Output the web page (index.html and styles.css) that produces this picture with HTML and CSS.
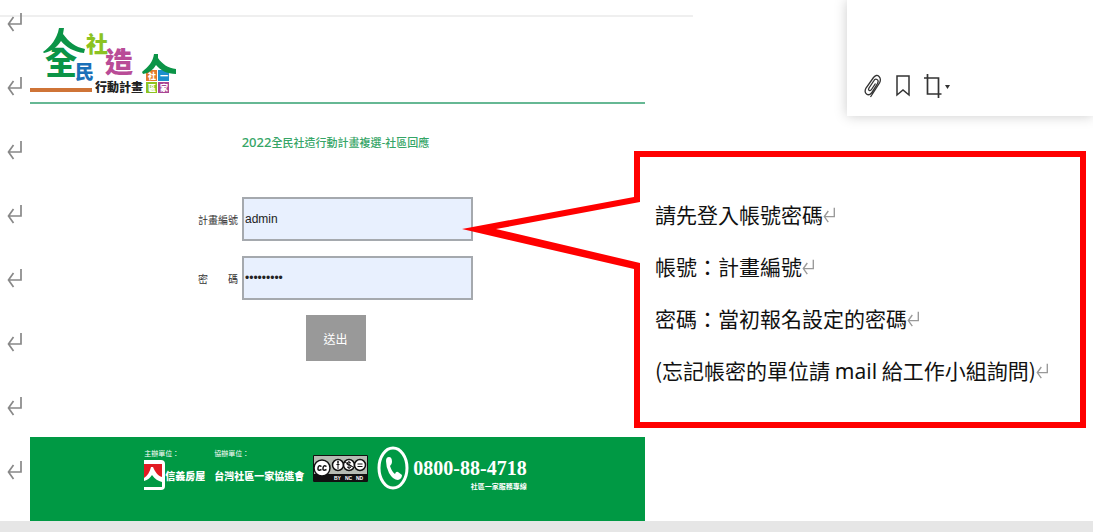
FILE: index.html
```html
<!DOCTYPE html>
<html lang="zh-Hant">

<head>
    <meta charset="UTF-8">
    <meta name="viewport" content="width=device-width, initial-scale=1.0">
    <title>2022全民社造行動計畫複選-社區回應</title>
    <link rel="stylesheet" href="styles.css">
</head>

<body>
    <svg class="defs" aria-hidden="true">
        <symbol id="return" viewBox="0 0 16 20">
            <path d="M14 1v11H1.500M6.500 5l-5 7 5 7" fill="none" stroke="currentColor" stroke-width="1.700" />
        </symbol>
    </svg>

    <div class="sheet">
        <div class="marks" aria-hidden="true">
            <svg><use href="#return" /></svg>
            <svg><use href="#return" /></svg>
            <svg><use href="#return" /></svg>
            <svg><use href="#return" /></svg>
            <svg><use href="#return" /></svg>
            <svg><use href="#return" /></svg>
            <svg><use href="#return" /></svg>
            <svg><use href="#return" /></svg>
        </div>

        <main class="site">
            <header class="site-header">
                <svg class="logo" viewBox="0 0 150 76" role="img" aria-label="全民社造行動計畫">
                    <path d="M0 65h62" stroke="#cf7437" stroke-width="4" />
                    <text x="15" y="49" font-size="32" fill="#0b9447">全</text>
                    <path d="M13 27C21 21 27 14 29 3h5l-1 6c6 8 12 13 22 15l-1 4c-10-1-18-6-23-12-4 6-9 10-17 12z" fill="#0b9447" />
                    <text x="56" y="27" font-size="22" fill="#8cc321">社</text>
                    <text x="45" y="54" font-size="19" fill="#1a70b8">民</text>
                    <text x="75" y="48" font-size="28" fill="#b94c97">造</text>
                    <text x="65" y="67" font-size="12" fill="#222">行動計畫</text>
                    <path d="M116 45h11v11h-11z" fill="#e47b2c" />
                    <path d="M128 45h11v11h-11z" fill="#1d8fce" />
                    <path d="M116 57h11v11h-11z" fill="#8cc321" />
                    <path d="M128 57h11v11h-11z" fill="#a94695" />
                    <g font-size="8" fill="#fff">
                        <text x="118" y="54">社</text>
                        <text x="130" y="54">一</text>
                        <text x="118" y="66">區</text>
                        <text x="130" y="66">家</text>
                    </g>
                    <path d="M112 47c6-5 11-10 12-18h4v4c4 6 10 10 18 11v5c-9 0-16-4-20-9-3 5-7 8-13 9z" fill="#0b9447" />
                </svg>
            </header>

            <form class="login">
                <h1><span class="latin">2022</span>全民社造行動計畫複選-社區回應</h1>
                <div class="field">
                    <label for="plan">計畫編號</label>
                    <input id="plan" type="text" value="admin">
                </div>
                <div class="field">
                    <label for="pass">密　　碼</label>
                    <input id="pass" type="password" value="123456789">
                </div>
                <button type="button">送出</button>
            </form>

            <footer class="site-footer">
                <div class="org">
                    <small>主辦單位：</small>
                    <div class="org-name">
                        <svg class="sinyi" viewBox="0 0 21 30" aria-hidden="true">
                            <path d="M0 0h17q4 0 4 4v22q0 4-4 4H0z" fill="#fff" />
                            <path d="M0 4h18v13c-4-1-7-5-9-10H7c-1 5-4 9-7 11z" fill="#e21b23" />
                            <path d="M0 21c4-1 6-3 8-6 3 4 6 6 10 7v5H0z" fill="#009944" />
                        </svg>
                        <strong>信義房屋</strong>
                    </div>
                </div>
                <div class="org">
                    <small>協辦單位：</small>
                    <div class="org-name"><strong>台灣社區一家協進會</strong></div>
                </div>
                <svg class="cc" viewBox="0 0 55 27" role="img" aria-label="CC BY NC ND">
                    <path d="M.5.500h54v26H.5z" fill="#b5bbb3" stroke="#111" />
                    <path d="M1 19h53v7H1z" fill="#111" />
                    <circle cx="9" cy="13" r="8" fill="#fff" stroke="#111" stroke-width="1.500" />
                    <path d="M8.500 11.500q-3-2-3.500 1.500t3.500 1.500M13.500 11.500q-3-2-3.500 1.500t3.500 1.500" fill="none" stroke="#111" stroke-width="1.500" />
                    <g fill="#fff" stroke="#111" stroke-width="1.500">
                        <circle cx="25" cy="10" r="5.500" />
                        <circle cx="36" cy="10" r="5.500" />
                        <circle cx="47" cy="10" r="5.500" />
                    </g>
                    <circle cx="25" cy="7" r="1" fill="#111" />
                    <path d="M25 8v6M23.500 9.500h3M38 8q-3-2-4 0t2 2 2 2-4 0M36 6v8M32 7l8 5M44.500 9h5M44.500 11.500h5" fill="none" stroke="#111" />
                    <g font-size="5" fill="#fff">
                        <text x="21" y="25">BY</text>
                        <text x="32" y="25">NC</text>
                        <text x="43" y="25">ND</text>
                    </g>
                </svg>
                <div class="hotline">
                    <svg viewBox="0 0 32 44" aria-hidden="true">
                        <ellipse cx="16" cy="22" rx="14" ry="20" fill="none" stroke="#fff" stroke-width="3" />
                        <path d="M9 15q0-4 3-4t3 5q0 2-2 4 2 6 5 8 1-3 3-2l4 3q0 4-4 5-5 0-9-7-3-6-3-12z" fill="#fff" />
                    </svg>
                    <div class="phone">
                        <span class="number">0800-88-4718</span>
                        <small>社區一家服務專線</small>
                    </div>
                </div>
            </footer>
        </main>

        <aside class="side">
            <div class="toolbar">
                <button type="button" aria-label="附件">
                    <svg width="18" height="26" viewBox="0 0 18 26">
                        <path d="M6.500 24L15.500 10q2-4-.5-6.500t-5.500 1L2 15q-2 4 .5 6t5-1l6-9.500q1.500-3-.5-4t-3 1l-5 7.500q-1 2 .3 2.500t2.200-1l4-6" fill="none" stroke="#333" stroke-width="1.300" />
                    </svg>
                </button>
                <button type="button" aria-label="書籤">
                    <svg width="14" height="22" viewBox="0 0 14 22">
                        <path d="M1 1h12v19l-6-5-6 5z" fill="none" stroke="#333" stroke-width="1.500" />
                    </svg>
                </button>
                <button type="button" aria-label="裁切">
                    <svg width="26" height="24" viewBox="0 0 26 24">
                        <path d="M3.500 0v20h14M0 4h14.500v20" fill="none" stroke="#333" stroke-width="1.700" />
                        <path d="M21 11h5l-2.500 4z" fill="#333" />
                    </svg>
                </button>
            </div>

            <div class="callout">
                <svg class="tail" viewBox="0 0 178 80" aria-hidden="true">
                    <path d="M172 4L18 34l154 38h6V4z" fill="#fff" />
                    <path d="M178 0v7L34 34l144 34v9h-6v-3L0 34 172 2V0z" fill="#f00" />
                </svg>
                <p>請先登入帳號密碼<svg><use href="#return" /></svg></p>
                <p>帳號：計畫編號<svg><use href="#return" /></svg></p>
                <p>密碼：當初報名設定的密碼<svg><use href="#return" /></svg></p>
                <p>(忘記帳密的單位請 <span class="latin">mail</span> 給工作小組詢問)<svg><use href="#return" /></svg></p>
            </div>
        </aside>
    </div>
</body>

</html>
```
FILE: styles.css
```css
* {
    box-sizing: border-box;
}

body {
    margin: 0;
    background: #e6e6e6;
    color: #333;
    font-family: "Noto Sans CJK TC", sans-serif;
}

.defs {
    display: none;
}

.sheet {
    display: grid;
    grid-template-columns: 30px minmax(0, 615fr) minmax(0, 448fr);
    background: #fff linear-gradient(#efefef, #efefef) 0 15px / 63.4% 2px no-repeat;
}

.marks {
    display: flex;
    flex-direction: column;
    gap: 44px;
    padding: 12px 0 0 7px;
    color: #888;
}

.marks svg {
    width: 16px;
    height: 20px;
}

.site-header {
    padding-top: 25px;
    height: 104px;
    border-bottom: 2px solid #66b894;
}

.logo {
    display: block;
    width: 150px;
    height: 76px;
    font-weight: 900;
}

.login {
    display: flex;
    flex-direction: column;
    align-items: center;
    gap: 15px;
    padding: 28px 4px 76px 0;
}

.login h1 {
    margin: 0 0 30px;
    color: #35a566;
    font-size: 11px;
    font-weight: 500;
    line-height: 20px;
}

h1 .latin {
    font-family: "Noto Sans", sans-serif;
    font-size: 13px;
}

.field {
    display: flex;
    align-items: center;
    gap: 4px;
}

.field label {
    font-size: 10px;
    white-space: nowrap;
}

.field input {
    width: 231px;
    height: 44px;
    padding: 0 1px;
    border: 2px solid #a5a9ae;
    background: #e8f0fe;
    color: #222;
    font: 12px "Liberation Sans", sans-serif;
}

.login button {
    width: 60px;
    height: 46px;
    border: 0;
    background: #999;
    color: #fff;
    font: 12px "Noto Sans CJK TC", sans-serif;
}

.site-footer {
    display: flex;
    justify-content: center;
    gap: 9px;
    height: 84px;
    padding: 9px 4px 0 0;
    background: #009944;
    color: #fff;
    white-space: nowrap;
}

.site-footer small {
    display: block;
    font-size: 7px;
    line-height: 14px;
}

.org-name {
    display: flex;
    align-items: center;
    height: 30px;
    font-size: 10px;
}

.org-name strong {
    font-weight: 900;
}

.sinyi {
    width: 21px;
    height: 30px;
}

.cc {
    width: 55px;
    height: 27px;
    margin-top: 9px;
    font-family: "Liberation Sans", sans-serif;
    font-weight: bold;
}

.hotline {
    display: flex;
    gap: 4px;
}

.hotline svg {
    width: 32px;
    height: 44px;
}

.phone {
    padding-top: 11px;
    text-align: right;
}

.number {
    display: block;
    font: bold 20px/22px "Liberation Serif", serif;
}

.phone small {
    font-weight: 700;
}

.toolbar {
    display: flex;
    align-items: center;
    gap: 14px;
    width: 55%;
    height: 116px;
    margin-left: auto;
    padding: 56px 0 0 17px;
    background: #fff;
    box-shadow: 0 0 12px #ccc;
}

.toolbar button {
    display: flex;
    padding: 0;
    border: 0;
    background: none;
}

.callout {
    position: relative;
    margin: 35px 7px 0 -11px;
    padding: 31px 0 25px 15px;
    border: 6px solid #f00;
    background: #fff;
    color: #111;
    font-size: 21px;
    line-height: 52px;
    white-space: nowrap;
}

.callout p {
    margin: 0;
}

.callout p svg {
    width: 13px;
    height: 16px;
    color: #999;
}

.callout .latin {
    font-family: "Noto Sans", "Open Sans", sans-serif;
}

/* pointer from the box to the plan number field */
.tail {
    position: absolute;
    top: 38px;
    right: 100%;
    width: 178px;
    height: 80px;
}
```
